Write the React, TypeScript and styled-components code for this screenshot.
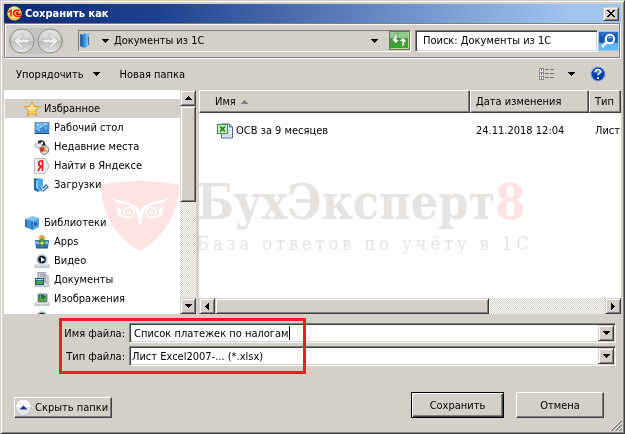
import React from "react";
import styled, { createGlobalStyle, css } from "styled-components";

const face = "#d4d0c8";
const shade = "#808080";
const dark = "#404040";

const GlobalStyle = createGlobalStyle`
  *, *::before, *::after { box-sizing: border-box; }
  body { margin: 0; background: ${face}; }
  body, button, input, select, table {
    font-family: "DejaVu Sans Condensed", "DejaVu Sans", Tahoma, sans-serif;
    font-size: 11px;
    line-height: 17px;
    color: #000;
  }
  button, input, select { margin: 0; padding: 0; border: 0; background: none; border-radius: 0; }
  svg { display: block; flex: none; }
`;

const raised = css`
  background: ${face};
  border: 1px solid;
  border-color: ${face} ${dark} ${dark} ${face};
  box-shadow: inset 1px 1px #fff, inset -1px -1px ${shade};
`;

const sunken = css`
  background: #fff;
  border: 1px solid;
  border-color: ${shade} #fff #fff ${shade};
  box-shadow: inset 1px 1px ${dark}, inset -1px -1px ${face};
`;

const Dialog = styled.main`
  position: relative;
  display: flex;
  flex-direction: column;
  height: 100vh;
  padding: 2px;
  background: ${face};
  border: 1px solid;
  border-color: ${face} ${dark} ${dark} ${face};
  box-shadow: inset 1px 1px #fff, inset -1px -1px ${shade};
  overflow: hidden;
`;

const TitleBar = styled.header`
  display: flex;
  align-items: center;
  flex: none;
  gap: 3px;
  height: 19px;
  margin: 1px 1px 0;
  padding: 0 2px 0 3px;
  background: linear-gradient(90deg, #0e2a72 0%, #1f4290 25%, #4668aa 44%, #7596cc 68%, #a2c4ee 92%);
`;

const Title = styled.h1`
  flex: 1;
  margin: 0;
  font-size: 11px;
  line-height: 17px;
  font-weight: bold;
  color: #fff;
`;

const CloseButton = styled.button`
  ${raised}
  display: grid;
  place-items: center;
  width: 16px;
  height: 14px;
`;

const NavBar = styled.nav`
  display: flex;
  align-items: center;
  flex: none;
  height: 35px;
  margin: 0 2px 0 1px;
  padding-left: 3px;
  border: 1px solid ${shade};
  box-shadow: inset 1px 1px #fff, 1px 1px #fff;
`;

const History = styled.div`
  display: flex;
  gap: 2px;
  margin-right: 14px;
  padding: 0 1px;
  background: #c3c3c1;
  border-radius: 13px;
`;

const RoundButton = styled.button`
  width: 26px;
  height: 26px;
  border-radius: 50%;
`;

const Address = styled.div`
  display: flex;
  align-items: center;
  flex: 1;
  min-width: 0;
  height: 22px;
  border: 1px solid;
  border-color: ${shade} #fff #fff ${shade};
`;

const Crumb = styled.button`
  display: flex;
  align-items: center;
  gap: 5px;
  flex: 1;
  margin-left: 12px;
  text-align: left;
  white-space: nowrap;
`;

const IconButton = styled.button<{ $gap?: number }>`
  display: grid;
  place-items: center;
  margin-left: ${(p) => p.$gap ?? 0}px;
`;

const Search = styled.input`
  ${sunken}
  flex: 0 1 183px;
  min-width: 0;
  height: 22px;
  margin-left: 4px;
  padding: 0 7px;
  &::placeholder { color: #000; opacity: 1; }
`;

const Toolbar = styled.div`
  display: flex;
  align-items: center;
  flex: none;
  height: 32px;
  padding: 0 16px 0 13px;
`;

const ToolButton = styled.button`
  display: flex;
  align-items: center;
  gap: 9px;
  margin-right: 20px;
  white-space: nowrap;
`;

const Spacer = styled.div`
  flex: 1;
`;

const Panes = styled.div`
  display: flex;
  flex: 1;
  gap: 3px;
  min-height: 0;
  margin: 0 1px;
`;

const TreePane = styled.aside`
  display: flex;
  flex: 0 0 192px;
  min-width: 0;
  background: #fff;
`;

const Tree = styled.ul`
  flex: 1;
  margin: 0;
  padding: 9px 0 0 1px;
  list-style: none;
  overflow: hidden;
`;

const TreeItem = styled.li<{ $level: number; $selected?: boolean; $spaced?: boolean }>`
  display: flex;
  align-items: center;
  gap: 4px;
  height: 19px;
  margin-top: ${(p) => (p.$spaced ? 19 : 0)}px;
  padding-left: ${(p) => (p.$level ? 29 : 19)}px;
  background: ${(p) => (p.$selected ? face : "transparent")};
  line-height: 19px;
  white-space: nowrap;
`;

const ScrollTrack = styled.div<{ $horizontal?: boolean }>`
  display: flex;
  flex: 0 0 16px;
  flex-direction: ${(p) => (p.$horizontal ? "row" : "column")};
  justify-content: space-between;
  background: repeating-conic-gradient(${face} 0 25%, #fff 0 50%) 0 0 / 2px 2px;
`;

const ScrollButton = styled.button`
  ${raised}
  display: grid;
  place-items: center;
  flex: none;
  width: 16px;
  height: 16px;
`;

const ScrollThumb = styled.div<{ $share: number }>`
  ${raised}
  flex: 0 0 ${(p) => p.$share}%;
  margin: 0 0 auto;
`;

const HorizontalThumb = styled(ScrollThumb)`
  margin: 0 auto 0 0;
`;

const FilePane = styled.section`
  display: flex;
  flex: 1;
  flex-direction: column;
  min-width: 0;
  background: #fff;
`;

const TableArea = styled.div`
  flex: 1;
  min-height: 0;
  overflow: hidden;
`;

const FileTable = styled.table`
  width: 100%;
  table-layout: fixed;
  border-collapse: separate;
  border-spacing: 0;
`;

const HeadCell = styled.th<{ $width?: string; $first?: boolean }>`
  width: ${(p) => p.$width ?? "auto"};
  height: 23px;
  padding: 0 0 0 ${(p) => (p.$first ? 15 : 5)}px;
  font-weight: normal;
  text-align: left;
  white-space: nowrap;
  overflow: hidden;
  background: ${face};
  border-top: 1px solid #fff;
  border-left: 1px solid #fff;
  border-bottom: 1px solid ${dark};
  border-right: 1px solid ${dark};
  box-shadow: inset -1px -1px ${shade};
`;

const Cell = styled.td<{ $first?: boolean }>`
  height: 35px;
  padding: 0 0 0 ${(p) => (p.$first ? 18 : 6)}px;
  white-space: nowrap;
  overflow: hidden;
`;

const Inline = styled.span<{ $gap: number }>`
  display: flex;
  align-items: center;
  gap: ${(p) => p.$gap}px;
`;

const Fields = styled.form`
  position: relative;
  display: grid;
  grid-template-columns: 121px 1fr;
  flex: none;
  align-items: center;
  gap: 3px 4px;
  margin: 9px 6px 0 1px;
`;

const FieldLabel = styled.label`
  text-align: right;
  white-space: nowrap;
`;

const Field = styled.div<{ $indent: number }>`
  ${sunken}
  display: flex;
  align-items: center;
  min-width: 0;
  height: 20px;
  padding: 0 1px 0 ${(p) => p.$indent}px;
`;

const NameInput = styled.input`
  field-sizing: content;
  min-width: 20px;
  outline: none;
`;

const TypeSelect = styled.select`
  flex: 1;
  min-width: 0;
  appearance: none;
  outline: none;
`;

const Caret = styled.span`
  width: 1px;
  height: 14px;
  background: #000;
`;

const DropButton = styled(ScrollButton)`
  margin-left: auto;
`;

const Highlight = styled.div`
  position: absolute;
  top: -5px;
  left: 55px;
  width: 247px;
  height: 56px;
  border: 3px solid #ed1c24;
  pointer-events: none;
`;

const Footer = styled.footer`
  display: flex;
  align-items: flex-end;
  flex: none;
  gap: 12px;
  margin: 26px 18px 13px 11px;
`;

const HideButton = styled.button`
  display: flex;
  align-items: center;
  gap: 3px;
  height: 21px;
  padding: 0 3px 0 0;
  border: 1px solid;
  border-color: #fff ${dark} ${dark} #fff;
  box-shadow: inset -1px -1px ${shade};
  white-space: nowrap;
`;

const ActionButton = styled.button<{ $primary?: boolean }>`
  width: ${(p) => (p.$primary ? 93 : 88)}px;
  height: 26px;
  background: ${face};
  border: 1px solid;
  border-color: ${(p) => (p.$primary ? "#000" : `#fff ${dark} ${dark} #fff`)};
  box-shadow: ${(p) =>
    p.$primary
      ? `inset 1px 1px #fff, inset -1px -1px ${dark}, inset -2px -2px ${shade}`
      : `inset -1px -1px ${shade}`};
`;

const Grip = styled.div`
  position: absolute;
  right: 2px;
  bottom: 2px;
`;

const Watermark = styled.div`
  position: absolute;
  top: 173px;
  left: 98px;
  display: flex;
  align-items: center;
  gap: 16px;
  mix-blend-mode: multiply;
  pointer-events: none;
`;

const Brand = styled.div`
  font-family: "DejaVu Serif Condensed", "DejaVu Serif", serif;
  font-size: 48px;
  line-height: 56px;
  font-weight: bold;
  color: #e7e3e0;
  white-space: nowrap;
`;

const BrandAccent = styled.span`
  color: #ffe2e2;
`;

const Tagline = styled.div`
  font-family: "DejaVu Serif Condensed", "DejaVu Serif", serif;
  font-size: 18px;
  line-height: 28px;
  letter-spacing: 4px;
  color: #e7e3e0;
  white-space: nowrap;
`;

type Dir = "up" | "down" | "left" | "right";
const arrows: Record<Dir, [number, number, string]> = {
  up: [7, 4, "M3 0h1v1h1v1h1v1h1v1H0V3h1V2h1V1h1z"],
  down: [7, 4, "M0 0h7v1H6v1H5v1H4v1H3V3H2V2H1V1H0z"],
  left: [4, 7, "M3 0h1v7H3V6H2V5H1V4H0V3h1V2h1V1h1z"],
  right: [4, 7, "M0 0h1v1h1v1h1v1h1v1H3v1H2v1H1v1H0z"],
};
const Arrow = ({ dir, color = "#000" }: { dir: Dir; color?: string }) => {
  const [w, h, d] = arrows[dir];
  return (
    <svg width={w} height={h} viewBox={`0 0 ${w} ${h}`} fill={color} aria-hidden>
      <path d={d} shapeRendering="crispEdges" />
    </svg>
  );
};

const Logo = () => (
  <svg width="15" height="15" viewBox="0 0 15 15" aria-hidden>
    <circle cx="7.5" cy="7.5" r="7.2" fill="#f4b62c" />
    <circle cx="7" cy="6.500" r="6" fill="#ffe994" />
    <path d="M1.500 6.200L4 4.300v6.200M12.500 5.300C11 3.700 6.500 3.800 6.500 7.200c0 3.500 3.200 3 7.700 3M11.500 7c-2-1-3 .8-1.500 1.200h4" fill="none" stroke="#d61f1a" strokeWidth="1.600" />
  </svg>
);

const NavArrow = ({ flip }: { flip?: boolean }) => (
  <svg width="26" height="26" viewBox="0 0 26 26" aria-hidden>
    <defs>
      <linearGradient id={flip ? "discF" : "discB"} x2="0" y2="1">
        <stop stopColor="#e6e6e4" />
        <stop offset=".48" stopColor="#d0d0ce" />
        <stop offset=".52" stopColor="#bababa" />
        <stop offset="1" stopColor="#e9e9e6" />
      </linearGradient>
    </defs>
    <circle cx="13" cy="13" r="12" fill={`url(#${flip ? "discF" : "discB"})`} stroke="#8e8e8e" />
    <path
      transform={flip ? "translate(26 0) scale(-1 1)" : undefined}
      d="M5 13l7-7h3l-4.500 5.200H20v3.600h-9.500L15 20h-3z"
      fill="#efefed"
      stroke="#b1b1af"
      strokeWidth=".7"
    />
  </svg>
);

const FolderBlue = () => (
  <svg width="11" height="16" viewBox="0 0 11 16" aria-hidden>
    <path d="M1 1l4 1v13l-4-2z" fill="#2668a8" />
    <path d="M4 0l4 1v13l-4 1z" fill="#4a9fe4" />
    <path d="M7 1l3-1v12l-3 1z" fill="#6fb9f4" />
    <path d="M5 2v11" stroke="#2f7fc6" />
    <path d="M9.500 4v8" stroke="#3a6c9f" />
  </svg>
);

const Refresh = () => (
  <svg width="21" height="19" viewBox="0 0 21 19" aria-hidden>
    <rect x=".5" y=".5" width="20" height="18" fill="#37a52d" stroke="#667866" />
    <path d="M1 1h19v6H1z" fill="#8ccb88" />
    <path d="M1.500 17.500h18v-16" fill="none" stroke="#b8d98d" />
    <path d="M9.500 2.500C6 3 5 5 5 7.500H2.500L6.500 12.500 10.500 9H8C7.500 6 8 4 9.500 2.500zM11.500 16c3.500-1 4.500-2.500 4-5H18L14 6 10 10.500h3c.5 2.500 0 4-1.500 5.500z" fill="#fff" stroke="#3e713b" strokeWidth=".6" />
  </svg>
);

const SearchIcon = () => (
  <svg width="21" height="20" viewBox="0 0 21 20" aria-hidden>
    <rect x=".5" y=".5" width="20" height="19" fill="#2d6fc4" stroke="#9ec7ef" />
    <path d="M1 12h19v7H1z" fill="#62b5f3" />
    <path d="M2 3v8l2-6v7l3-9M16 3l2 8V3" fill="none" stroke="#164a9b" />
    <path d="M9 11l-5 5" stroke="#f2f7ff" strokeWidth="2.500" />
    <circle cx="12" cy="8" r="4.200" fill="#2e65ae" stroke="#fff" strokeWidth="2" />
    <path d="M10 7q2-2 4 0" stroke="#a8ccef" fill="none" />
  </svg>
);

const ViewIcon = () => (
  <svg width="15" height="12" viewBox="0 0 15 12" shapeRendering="crispEdges" aria-hidden>
    {[0, 4, 8].map((y, i) => (
      <g key={y}>
        <rect x="0" y={y} width="5" height="4" fill="#8b8b8b" />
        <rect x="1" y={y + 1} width="3" height="3" fill="#fff" />
        <rect x="2" y={y + 1} width="1" height="2" fill={i === 1 ? "#b33" : "#777"} />
        <rect x="6" y={y + 1} width="4" height="1" fill="#777" />
        <rect x="11" y={y + 1} width="4" height="1" fill="#777" />
      </g>
    ))}
    <rect x="0" y="11" width="5" height="1" fill="#8b8b8b" />
  </svg>
);

const Help = () => (
  <svg width="16" height="16" viewBox="0 0 16 16" aria-hidden>
    <circle cx="8" cy="8" r="7.500" fill="#8fabd9" />
    <circle cx="8" cy="8" r="6.500" fill="#0b3cab" />
    <path d="M3 6c1-4 9-4 10 0-2 2-8 2-10 0z" fill="#4779d0" />
    <path d="M5.500 6c0-3.500 5.200-3 5 0-.2 1.500-2.500 1.500-2.500 3.300M8 11v2" fill="none" stroke="#fff" strokeWidth="1.600" />
  </svg>
);

const Star = () => (
  <svg width="16" height="16" viewBox="0 0 16 16" aria-hidden>
    <path d="M8 .8l2.200 4.600 5.200.5-3.900 3.600 1.200 5.500L8 12.300 3.300 15l1.200-5.500L.6 5.900l5.200-.5z" fill="#ffd269" stroke="#dc9435" />
    <path d="M8 2.500l1.500 4 4 .3-4 1.500H4.500L2.500 6.500l4-.5z" fill="#fff0b4" />
  </svg>
);

const Desktop = () => (
  <svg width="16" height="16" viewBox="0 0 16 16" aria-hidden>
    <rect x="1" y="2.500" width="14" height="11" fill="#3d8cd2" stroke="#6a94bb" />
    <path d="M2 3h12v2L7 8 2 10z" fill="#73b9ef" />
    <path d="M3 5h2M6 7h1M10 4h2M11 8h2M4 10h2" stroke="#d5efff" />
    <path d="M1 13.500h14" stroke="#244b79" />
  </svg>
);

const Recent = () => (
  <svg width="16" height="16" viewBox="0 0 16 16" aria-hidden>
    <path d="M4 2l3-1 3 1 2 5-2 2-6-2z" fill="#25272b" />
    <path d="M1 5l6-1 2 3-3 2-5-1z" fill="#e8e8e8" stroke="#777" strokeWidth=".5" />
    <circle cx="8" cy="4" r="1.200" fill="#fff" />
    <circle cx="10.500" cy="11" r="4.300" fill="#dde3e7" stroke="#777" />
    <path d="M5 9l5-1 1 4-4 1z" fill="#cf352b" />
    <path d="M11 8v4h3" fill="none" stroke="#e5a63c" strokeWidth="1.500" />
  </svg>
);

const Yandex = () => (
  <svg width="16" height="16" viewBox="0 0 16 16" aria-hidden>
    <path d="M1 .5h10l4.500 7.500-4.500 7.500H1q-.5 0-.5-.5V1q0-.5.500-.5z" fill="#eeeeed" stroke="#b9b9b9" />
    <path d="M8.500 13V3H7C4 3 4 8 7 8h1.500M7 8l-3 5" fill="none" stroke="#ec1717" strokeWidth="1.700" />
  </svg>
);

const Downloads = () => (
  <svg width="16" height="16" viewBox="0 0 16 16" aria-hidden>
    <path d="M0 1l4 1v13l-4-2z" fill="#22659f" />
    <path d="M3 1l6 1v11l-5 2z" fill="#4ca8e8" />
    <path d="M2 3l2 1v8l-2-1z" fill="#8acbf6" />
    <path d="M5 9l4 6 6-5-3-3-3 3z" fill="#2e6eae" />
    <path d="M7 9l2 4 4-4" fill="none" stroke="#c5e5fa" strokeWidth="1.200" />
  </svg>
);

const Libraries = () => (
  <svg width="16" height="16" viewBox="0 0 16 16" aria-hidden>
    <path d="M1 4l7-3 7 2-6 3z" fill="#82c4f4" />
    <path d="M1 4l8 2v9l-8-3z" fill="#2e79be" />
    <path d="M9 6l6-3v9l-6 3z" fill="#4fa2df" />
    <path d="M4 5v8M6 5.500v8" stroke="#5ba9e3" />
    <path d="M10 8l3-1v3l-3 1z" fill="#1e5f9d" />
  </svg>
);

const Apps = () => (
  <svg width="16" height="16" viewBox="0 0 16 16" aria-hidden>
    <path d="M1 6h14l-1 8H2z" fill="#3470bb" />
    <path d="M2 7h12v3H2z" fill="#83b6ea" />
    <circle cx="8" cy="4" r="3" fill="#dca84c" />
    <path d="M4 7l4-3 4 4-4 5z" fill="#3a9b3e" />
    <circle cx="8" cy="9" r="1.500" fill="#f9de59" />
    <path d="M2 14h12" stroke="#284d80" />
  </svg>
);

const Media = ({ kind }: { kind: "video" | "docs" | "image" }) => (
  <svg width="16" height="16" viewBox="0 0 16 16" aria-hidden>
    <path d="M1 11h14l1 4H0z" fill="#c5cbd0" />
    <path d="M2 12h12" stroke="#fff" />
    {kind === "video" && (
      <>
        <circle cx="8" cy="6.500" r="5.500" fill="#b8c1c9" stroke="#dfe3e6" />
        <circle cx="8" cy="6.500" r="3.800" fill="#101c2a" />
        <path d="M7 4l4 3-4 2z" fill="#fff" />
      </>
    )}
    {kind === "docs" && (
      <>
        <path d="M4 0h7v10H4z" fill="#cbd1d7" stroke="#848c94" />
        <path d="M6 2h4M6 4h4M12 2v9h2V3" stroke="#8f979e" fill="none" />
        <path d="M1 6h9v7H1z" fill="#1d598d" />
        <path d="M2 10l3-2 4 1v3H2z" fill="#48a94b" />
        <path d="M2 7h7v1H2z" fill="#a7d6f2" />
      </>
    )}
    {kind === "image" && (
      <>
        <path d="M4 3h9v8H4z" fill="#305f50" stroke="#8fa09a" />
        <path d="M5 9l1-4 3 3 3-3v5H5z" fill="#51a44a" />
        <path d="M6 5h1M10 4h2" stroke="#c1e7b2" />
      </>
    )}
  </svg>
);

const Excel = () => (
  <svg width="17" height="16" viewBox="0 0 17 16" aria-hidden>
    <path d="M4.500 1h8l3 3v11h-11z" fill="#f8fbff" stroke="#4b659b" />
    <path d="M12.500 1v3h3" fill="#b9cbe8" stroke="#4b659b" />
    <path d="M11 7h3M11 9h3M6 12h8M6 14h8" stroke="#a7b5d0" />
    <rect x=".5" y="1.500" width="10" height="9" fill="#d8efcf" stroke="#389438" />
    <path d="M3 3.500l5 5M8 3.500l-5 5" stroke="#2b8a2d" strokeWidth="1.800" />
  </svg>
);

const HideIcon = () => (
  <svg width="17" height="17" viewBox="0 0 17 17" aria-hidden>
    <circle cx="8.500" cy="8.500" r="8" fill="#e1e6ec" stroke="#b7bdc3" />
    <path d="M1 8a7.500 7.500 0 0 1 15 0z" fill="#f7f9fb" />
    <path d="M4.500 10.500l4-4 4 4z" fill="#193c87" />
  </svg>
);

const OwlHalf = () => (
  <>
    <path d="M13 18C19 24 35 20 41 32.500V46C39 44 38 40 38.500 37C37 29 31 25.500 25 25C18 24.500 14 22 13 18z" fill="#fff" />
    <circle cx="30" cy="33.500" r="5" fill="none" stroke="#fff" strokeWidth="2" />
    <circle cx="30" cy="33.500" r="2" fill="#fff" />
    <path d="M17 27l6 4-1 3 3 5-8-4 3-1-5-4 4 1z" fill="#fff" />
  </>
);

const Shield = () => (
  <svg width="82" height="74" viewBox="0 0 82 74" aria-hidden>
    <path d="M2 6Q40-2 80 6C80 33 66 57 41 72C17 59 2 34 2 6z" fill="#ffe2e2" />
    <OwlHalf />
    <g transform="translate(82 0) scale(-1 1)"><OwlHalf /></g>
  </svg>
);

const favourites = [
  { name: "Рабочий стол", icon: <Desktop /> },
  { name: "Недавние места", icon: <Recent /> },
  { name: "Найти в Яндексе", icon: <Yandex /> },
  { name: "Загрузки", icon: <Downloads /> },
];
const libraries = [
  { name: "Apps", icon: <Apps /> },
  { name: "Видео", icon: <Media kind="video" /> },
  { name: "Документы", icon: <Media kind="docs" /> },
  { name: "Изображения", icon: <Media kind="image" /> },
];

export default function App() {
  return (
    <>
      <GlobalStyle />
      <Dialog>
        <TitleBar>
          <Logo />
          <Title>Сохранить как</Title>
          <CloseButton aria-label="Закрыть">
            <svg width="8" height="7" viewBox="0 0 8 7" shapeRendering="crispEdges" aria-hidden>
              <path d="M0 0h2v1h1v1h2V1h1V0h2v1H7v1H6v1H5v1h1v1h1v1h1v1H6V6H5V5H3v1H2v1H0V6h1V5h1V4h1V3H2V2H1V1H0z" />
            </svg>
          </CloseButton>
        </TitleBar>

        <NavBar>
          <History>
            <RoundButton aria-label="Назад"><NavArrow /></RoundButton>
            <RoundButton aria-label="Вперёд"><NavArrow flip /></RoundButton>
          </History>
          <Address>
            <FolderBlue />
            <Crumb><Arrow dir="down" />Документы из 1С</Crumb>
            <IconButton aria-label="Предыдущие расположения"><Arrow dir="down" /></IconButton>
            <IconButton $gap={11} aria-label="Обновить"><Refresh /></IconButton>
          </Address>
          <Search aria-label="Поиск" placeholder="Поиск: Документы из 1С" />
          <IconButton aria-label="Найти"><SearchIcon /></IconButton>
        </NavBar>

        <Toolbar>
          <ToolButton>Упорядочить<Arrow dir="down" /></ToolButton>
          <ToolButton>Новая папка</ToolButton>
          <Spacer />
          <IconButton aria-label="Вид"><ViewIcon /></IconButton>
          <IconButton $gap={14} aria-label="Другие виды"><Arrow dir="down" /></IconButton>
          <IconButton $gap={15} aria-label="Справка"><Help /></IconButton>
        </Toolbar>

        <Panes>
          <TreePane>
            <Tree>
              <TreeItem $level={0} $selected><Star />Избранное</TreeItem>
              {favourites.map((f) => (
                <TreeItem key={f.name} $level={1}>{f.icon}{f.name}</TreeItem>
              ))}
              <TreeItem $level={0} $spaced><Libraries />Библиотеки</TreeItem>
              {libraries.map((l) => (
                <TreeItem key={l.name} $level={1}>{l.icon}{l.name}</TreeItem>
              ))}
              <TreeItem $level={1}><Media kind="video" /></TreeItem>
            </Tree>
            <ScrollTrack>
              <ScrollButton aria-label="Вверх"><Arrow dir="up" /></ScrollButton>
              <ScrollThumb $share={43} />
              <ScrollButton aria-label="Вниз"><Arrow dir="down" /></ScrollButton>
            </ScrollTrack>
          </TreePane>

          <FilePane>
            <TableArea>
              <FileTable>
                <thead>
                  <tr>
                    <HeadCell $first><Inline $gap={5}>Имя<Arrow dir="up" color="#808080" /></Inline></HeadCell>
                    <HeadCell $width="119px">Дата изменения</HeadCell>
                    <HeadCell $width="32px">Тип</HeadCell>
                  </tr>
                </thead>
                <tbody>
                  <tr>
                    <Cell $first><Inline $gap={2}><Excel />ОСВ за 9 месяцев</Inline></Cell>
                    <Cell>24.11.2018 12:04</Cell>
                    <Cell>Лист</Cell>
                  </tr>
                </tbody>
              </FileTable>
            </TableArea>
            <ScrollTrack $horizontal>
              <ScrollButton aria-label="Влево"><Arrow dir="left" /></ScrollButton>
              <HorizontalThumb $share={65} />
              <ScrollButton aria-label="Вправо"><Arrow dir="right" /></ScrollButton>
            </ScrollTrack>
          </FilePane>
        </Panes>

        <Fields onSubmit={(e) => e.preventDefault()}>
          <FieldLabel htmlFor="file-name">Имя файла:</FieldLabel>
          <Field $indent={4}>
            <NameInput id="file-name" defaultValue="Список платежек по налогам" />
            <Caret />
            <DropButton type="button" aria-label="Предыдущие имена"><Arrow dir="down" /></DropButton>
          </Field>
          <FieldLabel htmlFor="file-type">Тип файла:</FieldLabel>
          <Field $indent={2}>
            <TypeSelect id="file-type"><option>Лист Excel2007-... (*.xlsx)</option></TypeSelect>
            <DropButton type="button" aria-label="Типы файлов"><Arrow dir="down" /></DropButton>
          </Field>
          <Highlight />
        </Fields>

        <Footer>
          <HideButton><HideIcon />Скрыть папки</HideButton>
          <Spacer />
          <ActionButton $primary>Сохранить</ActionButton>
          <ActionButton>Отмена</ActionButton>
        </Footer>

        <Watermark aria-hidden>
          <Shield />
          <div>
            <Brand>БухЭксперт<BrandAccent>8</BrandAccent></Brand>
            <Tagline>База ответов по учёту в 1С</Tagline>
          </div>
        </Watermark>
        <Grip>
          <svg width="12" height="12" viewBox="0 0 12 12" aria-hidden>
            <path d="M0 12L12 0M4 12l8-8M8 12l4-4" stroke="#fff" />
            <path d="M1.500 12L12 1.500M5.500 12L12 5.500M9.500 12L12 9.500" stroke="#808080" strokeWidth="1.500" />
          </svg>
        </Grip>
      </Dialog>
    </>
  );
}
